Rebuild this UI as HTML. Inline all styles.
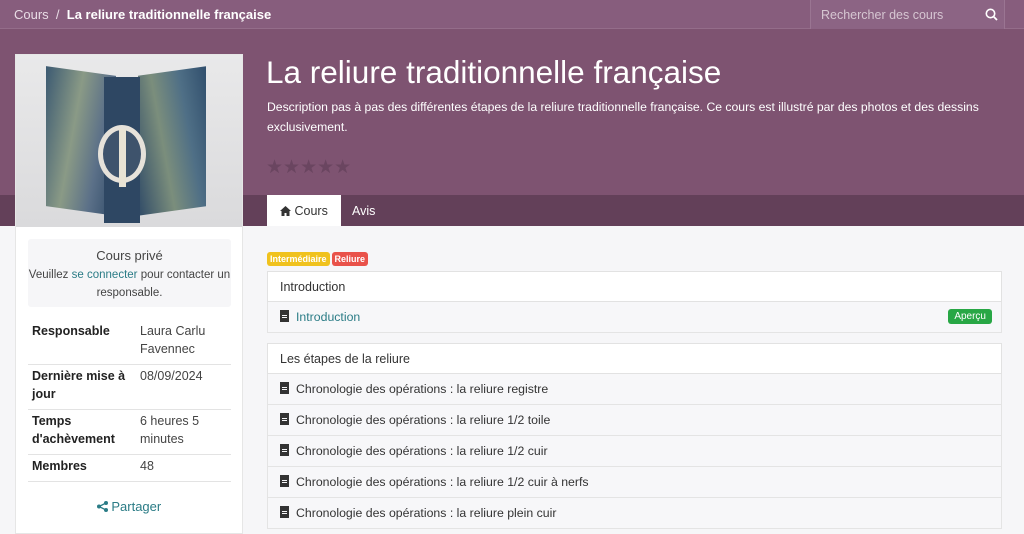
<!DOCTYPE html>
<html><head><meta charset="utf-8"><style>
*{box-sizing:border-box;margin:0;padding:0}
body{width:1024px;height:524px;overflow:hidden;background:#f6f6f8;font-family:"Liberation Sans",sans-serif;color:#333;font-size:13px;position:relative}
.hero{position:absolute;left:0;top:0;width:1024px;height:226px;background:#7e5371}
.top{position:absolute;left:0;top:0;width:1024px;height:29px;background:#875d7d;border-bottom:1px solid #946d8a}
.crumb{position:absolute;left:14px;top:7px;color:#e9dde6;font-size:13px}
.crumb b{color:#fff}
.search{position:absolute;left:810px;top:0;width:195px;height:29px;background:#8c6484;border-left:1px solid #9a7592;border-right:1px solid #9a7592;color:#d6c6d2;padding:8px 10px;font-size:12.5px}
.band{position:absolute;left:0;top:195px;width:1024px;height:31px;background:#634059}
.card{position:absolute;left:15px;top:54px;width:228px;height:480px;background:#fff;border:1px solid #e6e6e6}
.img{position:absolute;left:0;top:0;width:226px;height:172px;background:linear-gradient(#e9e9ea,#dadadc);overflow:hidden}
h1{position:absolute;left:266px;top:54px;color:#fff;font-size:31.5px;font-weight:normal}
.desc{position:absolute;left:267px;top:97px;width:740px;color:#fff;font-size:12.2px;line-height:20px}
.stars{position:absolute;left:266px;top:156px;color:#6a4560;font-size:19px;letter-spacing:0px}
.tab{position:absolute;top:195px;height:31px;padding:9px 13px;font-size:12.5px;color:#fff}
.priv{position:absolute;left:12px;top:184px;width:203px;height:68px;background:#f6f6f8;border-radius:3px;text-align:center;font-size:11.5px;line-height:18px;padding-top:8px;color:#444}
.priv .t{font-size:13px;margin-bottom:1px}
a{color:#2b7c86;text-decoration:none}
table{position:absolute;left:12px;top:265px;width:203px;border-collapse:collapse;font-size:12.5px;line-height:18px}
td{vertical-align:top;padding:2px 4px 6px;border-bottom:1px solid #e3e3e3;color:#444}
td:first-child{font-weight:bold;color:#222;width:108px}
.share{position:absolute;left:0;width:226px;top:444px;text-align:center;color:#2b7c86}
.badges{position:absolute;left:267px;top:250px}
.bd{display:inline-block;font-size:9px;font-weight:bold;color:#fff;padding:2px 3px;border-radius:3px;margin-right:2px}
.list{position:absolute;left:267px;width:735px}
.hd{background:#fff;border:1px solid #e2e2e2;height:31px;padding:8px 12px;color:#333;font-size:12.5px}
.row{background:#f7f7f9;border:1px solid #e4e4e4;border-top:none;height:31px;padding:8px 12px 0 12px;color:#333;position:relative;font-size:12.3px}
.ic{display:inline-block;width:9px;height:12px;background:#333;margin-right:7px;vertical-align:-1px;position:relative}
.ic:after{content:"";position:absolute;left:2px;top:5px;width:5px;height:1px;background:#f7f7f9;box-shadow:0 2px #f7f7f9}
.ap{position:absolute;right:9px;top:7px;background:#28a745;color:#fff;font-size:10px;padding:2px 6px;border-radius:3px}
</style></head><body>
<div class="hero"></div>
<div class="top"><div class="crumb">Cours &nbsp;/&nbsp; <b>La reliure traditionnelle française</b></div>
<div class="search">Rechercher des cours<svg style="position:absolute;right:6px;top:8px" width="13" height="13" viewBox="0 0 13 13"><circle cx="5.5" cy="5.5" r="4.2" fill="none" stroke="#fff" stroke-width="1.6"/><path d="M8.5 8.5L12 12" stroke="#fff" stroke-width="1.8"/></svg></div></div>
<div class="band"></div>
<h1>La reliure traditionnelle française</h1>
<div class="desc">Description pas à pas des différentes étapes de la reliure traditionnelle française. Ce cours est illustré par des photos et des dessins exclusivement.</div>
<div class="stars">★★★★★</div>
<div class="tab" style="left:267px;background:#fff;color:#333"><svg width="11" height="10" viewBox="0 0 11 10" style="vertical-align:-1px"><path d="M5.5 0L0 5h1.5v5h3V7h2v3h3V5H11z" fill="#333"/></svg> Cours</div>
<div class="tab" style="left:339px">Avis</div>
<div class="card">
<div class="img">
<div style="position:absolute;left:30px;top:16px;width:70px;height:140px;background:linear-gradient(100deg,#3c5a72,#8a9a86 40%,#5b7088 70%,#2f4a67);transform:skewY(8deg)"></div>
<div style="position:absolute;left:122px;top:16px;width:68px;height:140px;background:linear-gradient(80deg,#2f4a67,#7b8e7c 40%,#4f6f86 70%,#314f6d);transform:skewY(-8deg)"></div>
<div style="position:absolute;left:88px;top:22px;width:36px;height:146px;background:#2e4763"></div>
<div style="position:absolute;left:82px;top:70px;width:48px;height:58px;border-radius:50%;background:#3e536c;border:5px solid #e6e2da"></div>
<div style="position:absolute;left:103px;top:74px;width:7px;height:58px;background:#e8e3d4"></div>
</div>
<div class="priv"><div class="t">Cours privé</div>Veuillez <a>se connecter</a> pour contacter un responsable.</div>
<table>
<tr><td>Responsable</td><td>Laura Carlu Favennec</td></tr>
<tr><td>Dernière mise à jour</td><td>08/09/2024</td></tr>
<tr><td>Temps d'achèvement</td><td>6 heures 5 minutes</td></tr>
<tr><td>Membres</td><td>48</td></tr>
</table>
<div class="share"><svg width="11" height="11" viewBox="0 0 11 11" style="vertical-align:-1px"><circle cx="9" cy="2" r="2" fill="#2b7c86"/><circle cx="9" cy="9" r="2" fill="#2b7c86"/><circle cx="2" cy="5.5" r="2" fill="#2b7c86"/><path d="M9 2L2 5.5L9 9" stroke="#2b7c86" stroke-width="1.3" fill="none"/></svg> Partager</div>
</div>
<div class="badges"><span class="bd" style="background:#f0c21e">Intermédiaire</span><span class="bd" style="background:#e9524a">Reliure</span></div>
<div class="list" style="top:271px">
<div class="hd">Introduction</div>
<div class="row"><span class="ic"></span><a>Introduction</a><span class="ap">Aperçu</span></div>
</div>
<div class="list" style="top:343px">
<div class="hd">Les étapes de la reliure</div>
<div class="row"><span class="ic"></span>Chronologie des opérations : la reliure registre</div>
<div class="row"><span class="ic"></span>Chronologie des opérations : la reliure 1/2 toile</div>
<div class="row"><span class="ic"></span>Chronologie des opérations : la reliure 1/2 cuir</div>
<div class="row"><span class="ic"></span>Chronologie des opérations : la reliure 1/2 cuir à nerfs</div>
<div class="row"><span class="ic"></span>Chronologie des opérations : la reliure plein cuir</div>
</div>
</body></html>
